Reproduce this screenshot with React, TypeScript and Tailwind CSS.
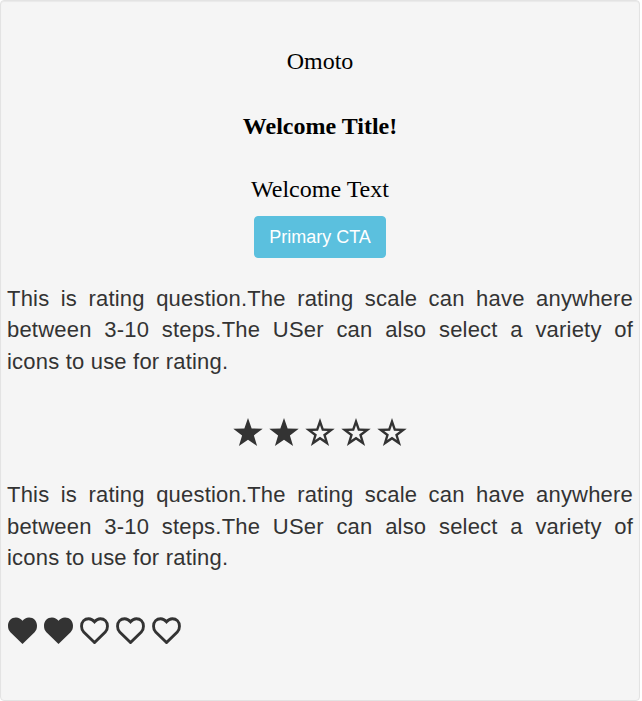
import React from "react";

const starOuter =
  "15,0 18.65,10.46 29.72,10.7 20.9,17.4 24.1,28 15,21.68 5.9,28 9.1,17.4 0.28,10.7 11.35,10.46";
const starInner =
  "15,7.28 16.93,12.82 22.8,12.95 18.13,16.5 19.82,22.12 15,18.77 10.18,22.12 11.87,16.5 7.2,12.95 13.07,12.82";

function Star({ filled }: { filled: boolean }) {
  const toPath = (pts: string) => "M" + pts.split(" ").join(" L") + " Z";
  return (
    <svg width="30" height="28" viewBox="0 0 30 28" className="block">
      {filled ? (
        <polygon points={starOuter} fill="#333333" />
      ) : (
        <path d={toPath(starOuter) + " " + toPath(starInner)} fill="#333333" fillRule="evenodd" />
      )}
    </svg>
  );
}

const heartPath =
  "M14.5 27 L2.4 15.2 C0.8 13.6 0 11.6 0 8.8 C0 3.6 3.4 0.4 8 0.4 C10.8 0.4 12.9 1.9 14.5 3.8 C16.1 1.9 18.2 0.4 21 0.4 C25.6 0.4 29 3.6 29 8.8 C29 11.6 28.2 13.6 26.6 15.2 Z";

function Heart({ filled }: { filled: boolean }) {
  return filled ? (
    <svg width="29" height="27" viewBox="0 0 29 27" className="block">
      <path d={heartPath} fill="#333333" />
    </svg>
  ) : (
    <svg width="29" height="27" viewBox="-1.6 -1.6 32.2 30.2" className="block">
      <path d={heartPath} fill="none" stroke="#333333" strokeWidth="3.2" strokeLinejoin="miter" />
    </svg>
  );
}

const para =
  "This is rating question.The rating scale can have anywhere between 3-10 steps.The USer can also select a variety of icons to use for rating.";

export default function App() {
  return (
    <div className="w-[640px] h-[701px] box-border bg-[#f5f5f5] border border-[#e3e3e3] rounded-[4px] shadow-[inset_0_1px_1px_rgba(0,0,0,0.05)] px-[6px] pt-[46px]">
      <div className="text-center text-black text-[24px] leading-[28px] font-['Liberation_Serif',serif]">
        Omoto
      </div>
      <div className="mt-[37px] text-center text-black text-[24px] leading-[28px] font-bold font-['Liberation_Serif',serif]">
        Welcome Title!
      </div>
      <div className="mt-[35px] text-center text-black text-[24px] leading-[28px] font-['Liberation_Serif',serif]">
        Welcome Text
      </div>
      <div className="mt-[13px] flex justify-center">
        <button className="w-[132px] h-[42px] rounded-[4px] bg-[#5bc0de] border border-[#5bc0de] text-white text-[18px] font-['Liberation_Sans',Arial,sans-serif] flex items-center justify-center">
          Primary CTA
        </button>
      </div>
      <p className="mt-[25px] text-[22px] leading-[31.43px] tracking-[0.2px] text-[#333333] text-justify font-['Liberation_Sans',Arial,sans-serif]">
        {para}
      </p>
      <div className="mt-[41px] flex justify-center gap-[6px]">
        <Star filled />
        <Star filled />
        <Star filled={false} />
        <Star filled={false} />
        <Star filled={false} />
      </div>
      <p className="mt-[33px] text-[22px] leading-[31.43px] tracking-[0.2px] text-[#333333] text-justify font-['Liberation_Sans',Arial,sans-serif]">
        {para}
      </p>
      <div className="mt-[43px] ml-[1px] flex gap-[7px]">
        <Heart filled />
        <Heart filled />
        <Heart filled={false} />
        <Heart filled={false} />
        <Heart filled={false} />
      </div>
    </div>
  );
}
